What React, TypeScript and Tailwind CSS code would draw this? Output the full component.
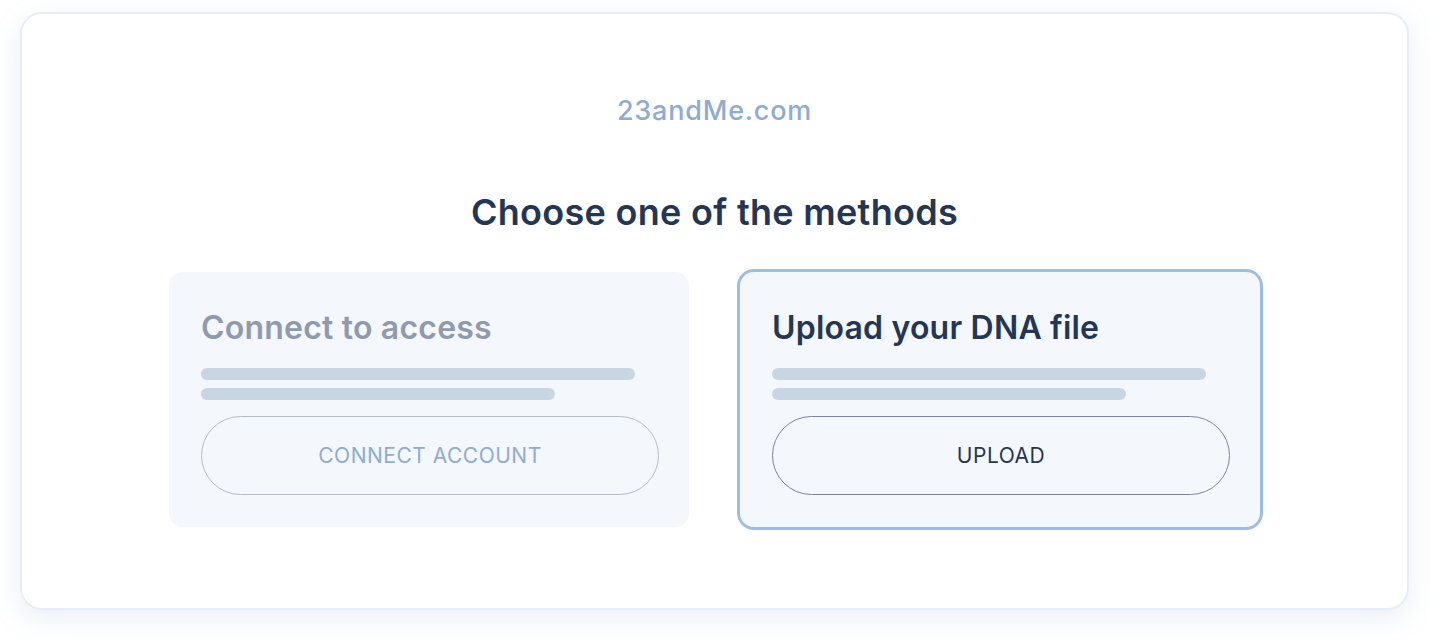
export default function App() {
  return (
    <div className="min-h-screen bg-white px-[20px] pt-[12px] font-['Inter',sans-serif]">
      <div className="h-[598px] w-[1389px] rounded-[22px] border-2 border-[#e6edf6] bg-white shadow-[0_8px_28px_rgba(140,160,200,0.18)] flex flex-col items-center">
        <p className="mt-[80px] text-[27px] leading-[34px] font-medium tracking-[0.8px] text-[#8eacd2]">23andMe.com</p>
        <h1 className="mt-[62px] text-[36px] leading-[44px] font-semibold tracking-[0.3px] text-[#243656]">Choose one of the methods</h1>
        <div className="mt-[38px] flex gap-[51px]">
          {/* disabled method */}
          <div className="w-[520px] rounded-[14px] bg-[#f4f7fb] px-[32px] pt-[36px] pb-[32px]">
            <h2 className="text-[32px] leading-[40px] font-semibold tracking-[0.2px] text-[#8f9bad]">Connect to access</h2>
            <div className="mt-[20px] h-[12px] w-[434px] rounded-full bg-[#c8d6e4]" />
            <div className="mt-[8px] h-[12px] w-[354px] rounded-full bg-[#c8d6e4]" />
            <button className="mt-[16px] h-[79px] w-[458px] rounded-full border border-[#b5bdcb] text-[21px] tracking-[0.5px] text-[#8eacd2] uppercase">
              Connect account
            </button>
          </div>
          {/* active method */}
          <div className="w-[520px] rounded-[14px] bg-[#f4f7fb] px-[32px] pt-[36px] pb-[32px] ring-[3px] ring-[#9dbde2]">
            <h2 className="text-[32px] leading-[40px] font-semibold tracking-[0.2px] text-[#243656]">Upload your DNA file</h2>
            <div className="mt-[20px] h-[12px] w-[434px] rounded-full bg-[#c8d6e4]" />
            <div className="mt-[8px] h-[12px] w-[354px] rounded-full bg-[#c8d6e4]" />
            <button className="mt-[16px] h-[79px] w-[458px] rounded-full border border-[#7b859a] text-[21px] tracking-[0.5px] text-[#243656] uppercase">
              Upload
            </button>
          </div>
        </div>
      </div>
    </div>
  );
}
